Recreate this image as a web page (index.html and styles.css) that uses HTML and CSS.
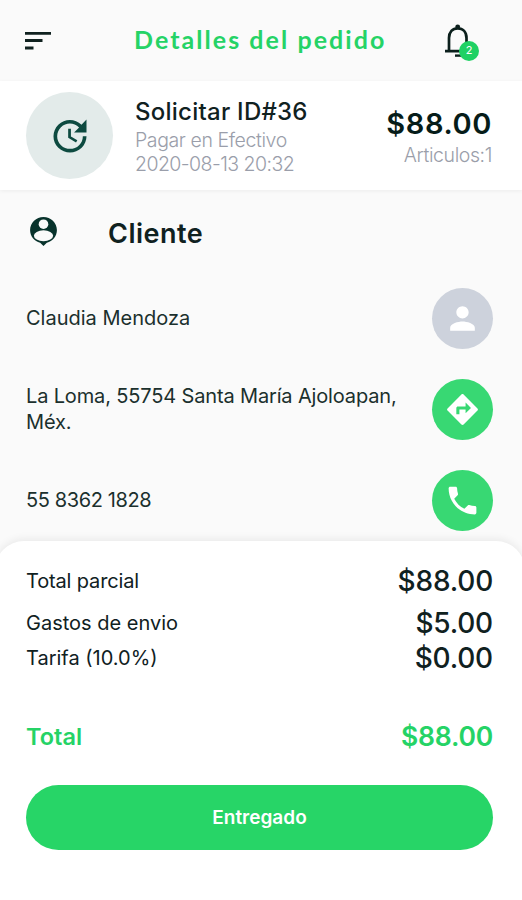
FILE: index.html
```
<!DOCTYPE html>
<html lang="es">
<head>
    <meta charset="UTF-8">
    <meta name="viewport" content="width=device-width, initial-scale=1.0">
    <title>Detalles del pedido</title>
    <link rel="stylesheet" href="styles.css">
</head>
<body>
    <header class="topbar">
        <svg class="menu-icon" width="27" height="20" viewBox="0 0 27 20">
            <path d="M0 2.3H26M0 9.5H17.5M0 17H8.5" stroke="#10211f" stroke-width="2.8"/>
        </svg>
        <h1>Detalles del pedido</h1>
        <div class="bell">
            <svg width="28" height="34" viewBox="0 0 28 34" fill="none" stroke="#0b1f1c" stroke-width="2.7">
                <path d="M0 27.2H25M4 27V14C4 8 7.500 4.300 12.700 4.300S21.500 8 21.500 14V27"/>
                <path d="M10 31.600H16" stroke-width="2.400"/>
                <circle cx="12.700" cy="2.800" r="2.400" fill="#0b1f1c" stroke="none"/>
            </svg>
            <span class="badge">2</span>
        </div>
    </header>

    <section class="order">
        <div class="order-icon">
            <svg width="44" height="44" viewBox="0 0 24 24" fill="#0d4a40">
                <path d="M21 10.120h-6.780l2.740-2.820c-2.730-2.700-7.150-2.800-9.880-.1-2.730 2.710-2.730 7.080 0 9.790s7.150 2.710 9.880 0C18.320 15.650 19 14.080 19 12.100h2c0 1.980-.88 4.550-2.640 6.290-3.510 3.480-9.210 3.480-12.720 0-3.500-3.470-3.530-9.110-.02-12.580s9.140-3.470 12.650 0L21 3v7.120zM12.500 8v4.250l3.500 2.080-.72 1.210L11 13V8h1.500z"/>
            </svg>
        </div>
        <div class="order-info">
            <h2>Solicitar ID#36</h2>
            <p>Pagar en Efectivo</p>
            <p class="date">2020-08-13 20:32</p>
        </div>
        <div class="order-price">
            <strong>$88.00</strong>
            <p>Articulos:1</p>
        </div>
    </section>

    <main class="client">
        <div class="client-title">
            <svg width="35" height="35" viewBox="0 0 24 24">
                <path d="M12 2c-5 0-9.200 4-9.200 9 0 4.300 3 7.800 6.900 8.700L12 22l2.300-2.300c3.900-.9 6.900-4.400 6.900-8.700 0-5-4.200-9-9.200-9z" fill="#08332c"/>
                <circle cx="12" cy="7" r="3.300" fill="#fafafa"/>
                <ellipse cx="12" cy="14.900" rx="6.600" ry="3.700" fill="#fafafa"/>
            </svg>
            <h2>Cliente</h2>
        </div>
        <div class="row">
            <p class="name">Claudia Mendoza</p>
            <div class="circle gray">
                <svg width="37" height="37" viewBox="0 0 24 24">
                    <path d="M12 12c2.210 0 4-1.790 4-4s-1.790-4-4-4-4 1.790-4 4 1.790 4 4 4zm0 2c-2.670 0-8 1.340-8 4v2h16v-2c0-2.660-5.330-4-8-4z"/>
                </svg>
            </div>
        </div>
        <div class="row">
            <p class="address">La Loma, 55754 Santa María Ajoloapan, Méx.</p>
            <div class="circle">
                <svg width="37" height="37" viewBox="0 0 24 24">
                    <path d="M21.710 11.290l-9-9c-.39-.39-1.020-.39-1.410 0l-9 9c-.39.39-.39 1.020 0 1.410l9 9c.39.39 1.020.39 1.410 0l9-9c.39-.38.39-1.010 0-1.410zM14 14.500V12h-4v3H8v-4c0-.55.45-1 1-1h5V7.500l3.500 3.500-3.500 3.500z"/>
                </svg>
            </div>
        </div>
        <div class="row">
            <p class="phone">55 8362 1828</p>
            <div class="circle">
                <svg width="37" height="37" viewBox="0 0 24 24">
                    <path d="M6.620 10.790c1.440 2.830 3.760 5.140 6.590 6.590l2.200-2.200c.27-.27.67-.36 1.020-.24 1.120.37 2.330.57 3.570.57.55 0 1 .45 1 1V20c0 .55-.45 1-1 1-9.390 0-17-7.610-17-17 0-.55.45-1 1-1h3.500c.55 0 1 .45 1 1 0 1.250.2 2.450.57 3.570.11.35.03.74-.25 1.020l-2.200 2.200z"/>
                </svg>
            </div>
        </div>
    </main>

    <section class="summary">
        <div class="line subtotal">
            <span>Total parcial</span>
            <b>$88.00</b>
        </div>
        <div class="line shipping">
            <span>Gastos de envio</span>
            <b>$5.00</b>
        </div>
        <div class="line fee">
            <span>Tarifa (10.0%)</span>
            <b>$0.00</b>
        </div>
        <div class="line total">
            <span>Total</span>
            <b>$88.00</b>
        </div>
        <button>Entregado</button>
    </section>
</body>
</html>
```
FILE: styles.css
```
* {
    box-sizing: border-box;
}
body {
    font-family: Inter, sans-serif;
    margin: 0;
    height: 900px;
    display: flex;
    flex-direction: column;
    background-color: #fafafa;
    color: #10211f;
    overflow: hidden;
}
h1, h2, p {
    margin: 0;
}
.topbar {
    display: flex;
    align-items: center;
    height: 81px;
    padding: 0 41px 0 25px;
}
.menu-icon {
    margin-right: 82px;
}
h1 {
    font-family: Lato, sans-serif;
    font-size: 25px;
    font-weight: 700;
    letter-spacing: 2.05px;
    padding-bottom: 3px;
    color: #25d366;
    white-space: nowrap;
}
.bell {
    position: relative;
    width: 36px;
    height: 34px;
    margin-left: auto;
}
.badge {
    position: absolute;
    left: 14px;
    top: 17px;
    width: 20px;
    height: 20px;
    border-radius: 50%;
    background-color: #1fd164;
    color: #fff;
    font-size: 11px;
    line-height: 19px;
    text-align: center;
}
.order {
    display: flex;
    align-items: center;
    height: 109px;
    padding: 0 30px 0 26px;
    background-color: #fff;
    box-shadow: 0 1px 4px rgba(0, 0, 0, 0.06);
}
.order-icon {
    display: flex;
    align-items: center;
    justify-content: center;
    width: 87px;
    height: 87px;
    margin-right: 22px;
    border-radius: 50%;
    background-color: #e3ebea;
}
.order-info h2 {
    font-size: 24px;
    font-weight: 500;
    line-height: 32px;
    letter-spacing: 0.25px;
}
.order p {
    font-size: 19.5px;
    font-weight: 300;
    line-height: 24px;
    letter-spacing: -0.4px;
    color: #9a9eaa;
}
.order .date {
    letter-spacing: -0.55px;
}
.order-price {
    margin-left: auto;
    padding-top: 1px;
    text-align: right;
}
.order-price strong {
    display: block;
    font-size: 29px;
    font-weight: 600;
    line-height: 38px;
    letter-spacing: 0.6px;
    color: #061c19;
}
.client {
    height: 351px;
    padding: 0 29px 0 26px;
}
.client-title {
    display: flex;
    align-items: center;
    height: 83px;
}
.client-title svg {
    margin-right: 47px;
}
.client-title h2 {
    font-size: 27px;
    font-weight: 600;
    letter-spacing: 0.5px;
    padding-top: 3px;
}
.row {
    display: flex;
    align-items: center;
    justify-content: space-between;
    height: 91px;
}
.row p {
    font-size: 20px;
    line-height: 26px;
    padding-bottom: 2px;
    color: #1b302d;
}
.address {
    width: 385px;
    letter-spacing: -0.15px;
}
.phone {
    letter-spacing: -0.4px;
}
.circle {
    display: flex;
    flex: none;
    align-items: center;
    justify-content: center;
    width: 61px;
    height: 61px;
    border-radius: 50%;
    background-color: #38d873;
}
.circle.gray {
    background-color: #cdd2dc;
}
.circle svg {
    fill: #fff;
}
/* the sheet runs a little past both screen edges */
.summary {
    flex: 1;
    margin: 0 -3px 0 -5px;
    padding: 19px 32px 0 31px;
    border-radius: 29px 29px 0 0;
    background-color: #fff;
    box-shadow: 0 -2px 8px rgba(0, 0, 0, 0.07);
}
.line {
    display: flex;
    align-items: center;
    justify-content: space-between;
    height: 42px;
    font-size: 20px;
}
.line b {
    font-size: 28px;
    font-weight: 500;
    letter-spacing: -0.2px;
}
.subtotal span {
    letter-spacing: -0.15px;
}
.line.fee {
    height: 28px;
}
.line.total {
    height: 44px;
    margin: 42px 0 27px;
    font-size: 23.5px;
    font-weight: 600;
    color: #25d366;
}
.line.total b {
    font-size: 26.5px;
    font-weight: 600;
}
button {
    display: block;
    width: 467px;
    height: 65px;
    border: 0;
    border-radius: 33px;
    background-color: #27d567;
    color: #fff;
    font-family: Inter, sans-serif;
    font-size: 19px;
    font-weight: 600;
}
```
